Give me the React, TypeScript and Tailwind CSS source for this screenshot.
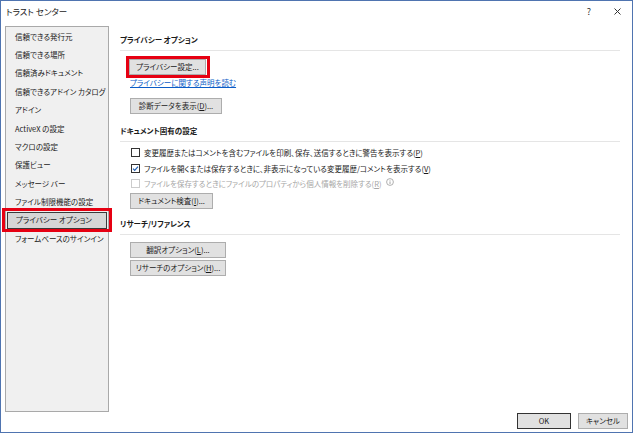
import React from "react";

const navItems = [
  "信頼できる発行元",
  "信頼できる場所",
  "信頼済みドキュメント",
  "信頼できるアドイン カタログ",
  "アドイン",
  "ActiveX の設定",
  "マクロの設定",
  "保護ビュー",
  "メッセージ バー",
  "ファイル制限機能の設定",
  "プライバシー オプション",
  "フォームベースのサインイン",
];

const SELECTED = "プライバシー オプション";

function Mn({ c }: { c: string }) {
  return <span className="underline underline-offset-1">{c}</span>;
}

function Btn({ w, children, def }: { w: string; children: React.ReactNode; def?: boolean }) {
  return (
    <div
      className={`${w} h-[16px] flex items-center justify-center bg-[#e1e1e1] border ${
        def ? "border-[#333333]" : "border-[#adadad]"
      } text-[#1a1a1a] leading-none`}
    >
      {children}
    </div>
  );
}

function SectionHeader({ title }: { title: string }) {
  return (
    <>
      <div className="h-[12px] flex items-center font-bold text-[#1a1a1a]">{title}</div>
      <div className="mt-[4px] w-[500px] border-t border-[#e5e5e5]" />
    </>
  );
}

function Check({ checked, disabled }: { checked?: boolean; disabled?: boolean }) {
  return (
    <svg width="9" height="9" viewBox="0 0 9 9" className="shrink-0">
      <rect
        x="0.5"
        y="0.5"
        width="8"
        height="8"
        fill="white"
        stroke={disabled ? "#cccccc" : "#333333"}
      />
      {checked && <path d="M2 4.6 L3.7 6.3 L7 2.7" fill="none" stroke="#1f5fb4" strokeWidth="1.2" />}
    </svg>
  );
}

export default function App() {
  return (
    <div className="w-[635px] h-[435px] bg-white font-['Noto_Sans_CJK_JP','Noto_Sans',sans-serif] [font-feature-settings:'palt'] text-[7.5px]">
      <div className="w-[633px] h-[433px] border border-[#4f74b0] flex flex-col">
        {/* title bar */}
        <div className="h-[24px] flex items-center pl-[5px] pr-[11px] text-[8.5px] text-[#1a1a1a]">
          <span className="-mt-[3px]">トラスト センター</span>
          <span className="ml-auto -mt-[3px] text-[9px] text-[#333]">?</span>
          <svg width="7" height="7" viewBox="0 0 7 7" className="ml-[23px] -mt-[3px]">
            <path d="M0.5 0.5 L6.5 6.5 M6.5 0.5 L0.5 6.5" stroke="#333" strokeWidth="1" />
          </svg>
        </div>

        <div className="flex flex-1">
          {/* left nav */}
          <div className="ml-[4px] mt-[1px] w-[104px] h-[386px] bg-[#f0f0f0] border border-[#a9a9a9] flex flex-col text-[#1a1a1a]">
            {navItems.map((item) =>
              item === SELECTED ? (
                <div key={item} className="relative h-[18.4px] flex items-center">
                  <div className="mx-[1px] w-full h-[17px] flex items-center pl-[8px] bg-[#d6d6d6] border border-[#3a3a3a]">
                    {item}
                  </div>
                  <div className="absolute -left-[4px] -right-[4px] -top-[3px] -bottom-[3px] border-[3px] border-[#e60012]" />
                </div>
              ) : (
                <div key={item} className="h-[18.4px] flex items-center pl-[9px] whitespace-nowrap">
                  {item}
                </div>
              )
            )}
          </div>

          {/* right pane */}
          <div className="ml-[11px] mt-[9px] flex flex-col text-[#1a1a1a]">
            <SectionHeader title="プライバシー オプション" />

            <div className="relative mt-[8px] ml-[9px] w-fit">
              <Btn w="w-[77px]">プライバシー設定...</Btn>
              <div className="absolute -left-[3px] -right-[4px] -top-[3px] -bottom-[3px] border-[3px] border-[#e60012]" />
            </div>
            <div className="mt-[2px] ml-[10px] h-[12px] flex items-center text-[#0b5cc7] underline underline-offset-1">
              プライバシーに関する声明を読む
            </div>
            <div className="mt-[9px] ml-[10px]">
              <Btn w="w-[92px]">
                診断データを表示(<Mn c="D" />)...
              </Btn>
            </div>

            <div className="mt-[11px]">
              <SectionHeader title="ドキュメント固有の設定" />
            </div>
            <div className="ml-[11px] mt-[3px] flex flex-col">
              <div className="h-[15.5px] flex items-center gap-[4px]">
                <Check />
                <span>
                  変更履歴またはコメントを含むファイルを印刷、保存、送信するときに警告を表示する(<Mn c="P" />)
                </span>
              </div>
              <div className="h-[15.5px] flex items-center gap-[4px]">
                <Check checked />
                <span>
                  ファイルを開くまたは保存するときに、非表示になっている変更履歴/コメントを表示する(<Mn c="V" />)
                </span>
              </div>
              <div className="h-[15.5px] flex items-center gap-[4px] text-[#a6a6a6]">
                <Check disabled />
                <span>
                  ファイルを保存するときにファイルのプロパティから個人情報を削除する(<Mn c="R" />)
                </span>
                <svg width="8" height="8" viewBox="0 0 8 8" className="ml-[1px] -mt-[3px]">
                  <circle cx="4" cy="4" r="3.4" fill="none" stroke="#9a9a9a" strokeWidth="0.8" />
                  <path d="M4 3.4 V6 M4 2 V2.6" stroke="#9a9a9a" strokeWidth="0.9" />
                </svg>
              </div>
            </div>
            <div className="mt-[1px] ml-[10px]">
              <Btn w="w-[83px]">
                ドキュメント検査(<Mn c="I" />)...
              </Btn>
            </div>

            <div className="mt-[9px]">
              <SectionHeader title="リサーチ/リファレンス" />
            </div>
            <div className="mt-[7px] ml-[10px] flex flex-col gap-[2px]">
              <Btn w="w-[96px]">
                翻訳オプション(<Mn c="L" />)...
              </Btn>
              <Btn w="w-[96px]">
                リサーチのオプション(<Mn c="H" />)...
              </Btn>
            </div>
          </div>
        </div>

        {/* footer */}
        <div className="h-[19px] flex items-start justify-end gap-[7px] pr-[4px]">
          <Btn w="w-[54px]" def>
            OK
          </Btn>
          <Btn w="w-[50px]">キャンセル</Btn>
        </div>
      </div>
    </div>
  );
}
